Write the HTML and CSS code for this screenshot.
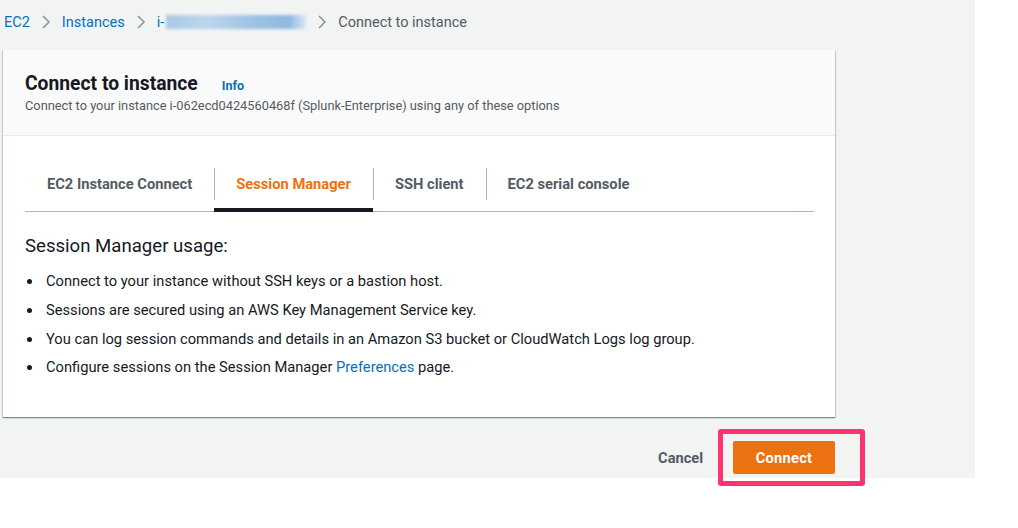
FILE: index.html
```html
<!DOCTYPE html>
<html lang="en">
<head>
<meta charset="utf-8">
<title>Connect to instance</title>
<link rel="stylesheet" href="styles.css">
</head>
<body>
<div class="page">
  <nav class="crumbs">
    <a class="crumb-link" href="#">EC2</a>
    <svg class="chev" viewBox="0 0 10 16" width="10" height="16"><path d="M2 2 L8 8 L2 14" fill="none" stroke="#879596" stroke-width="1.5"/></svg>
    <a class="crumb-link" href="#">Instances</a>
    <svg class="chev" viewBox="0 0 10 16" width="10" height="16"><path d="M2 2 L8 8 L2 14" fill="none" stroke="#879596" stroke-width="1.5"/></svg>
    <a class="crumb-link crumb-id" href="#">i-<span class="blurred"></span></a>
    <svg class="chev" viewBox="0 0 10 16" width="10" height="16"><path d="M2 2 L8 8 L2 14" fill="none" stroke="#879596" stroke-width="1.5"/></svg>
    <span class="crumb-current">Connect to instance</span>
  </nav>

  <section class="card">
    <header class="card-header">
      <div class="title-row">
        <h1 class="title">Connect to instance</h1>
        <a class="info" href="#">Info</a>
      </div>
      <p class="subtitle">Connect to your instance i-062ecd0424560468f (Splunk-Enterprise) using any of these options</p>
    </header>
    <div class="card-body">
      <div class="tabs">
        <div class="tab"><span>EC2 Instance Connect</span></div>
        <div class="tab active"><span>Session Manager</span></div>
        <div class="tab"><span>SSH client</span></div>
        <div class="tab"><span>EC2 serial console</span></div>
      </div>
      <h2 class="usage-title">Session Manager usage:</h2>
      <ul class="usage">
        <li>Connect to your instance without SSH keys or a bastion host.</li>
        <li>Sessions are secured using an AWS Key Management Service key.</li>
        <li>You can log session commands and details in an Amazon S3 bucket or CloudWatch Logs log group.</li>
        <li>Configure sessions on the Session Manager <a class="link" href="#">Preferences</a> page.</li>
      </ul>
    </div>
  </section>

  <div class="actions">
    <button class="btn-cancel" type="button">Cancel</button>
    <div class="highlight-wrap">
      <button class="btn-primary" type="button">Connect</button>
      <span class="highlight"></span>
    </div>
  </div>
</div>
</body>
</html>
```

FILE: styles.css
```css
* { box-sizing: border-box; }
html, body { margin: 0; padding: 0; background: #ffffff; }
body {
  min-height: 528px;
  font-family: Roboto, "Open Sans", "Liberation Sans", sans-serif;
  color: #16191f;
  font-size: 14.7px;
}
.page {
  position: relative;
  width: 975px;
  height: 478px;
  background: #f2f3f3;
  padding-left: 3px;
}
.crumbs {
  height: 50px;
  padding-left: 1px;
  padding-bottom: 6px;
  display: flex;
  align-items: center;
  font-size: 14.5px;
}
.crumb-link { color: #0073bb; text-decoration: none; }
.chev { margin: 0 11px 0 11px; }
.crumb-id { display: inline-flex; align-items: center; }
.blurred {
  display: inline-block;
  width: 140px;
  height: 14px;
  margin-left: 2px;
  background: linear-gradient(90deg, #a9c9e4 0%, #bcd6ec 30%, #9fc3e3 60%, #8fb9df 88%, #dbe8f4 100%);
  filter: blur(1.5px);
}
.crumb-current { color: #545b64; }

.card {
  width: 832px;
  background: #ffffff;
  box-shadow: 0 1px 1px 0 rgba(0, 28, 36, 0.3), 1px 1px 1px 0 rgba(0, 28, 36, 0.15), -1px 1px 1px 0 rgba(0, 28, 36, 0.15);
}
.card-header {
  background: #fafafa;
  border-bottom: 1px solid #eaeded;
  padding: 22px 22px 20px 22px;
  height: 86px;
}
.title-row { display: flex; align-items: baseline; gap: 24px; }
.title {
  margin: 0;
  font-size: 19.3px;
  line-height: 24px;
  font-weight: 700;
  color: #16191f;
}
.info {
  color: #0073bb;
  font-weight: 700;
  font-size: 12.5px;
  text-decoration: none;
}
.subtitle {
  margin: 2px 0 0 0;
  font-size: 12.8px;
  line-height: 16px;
  color: #545b64;
}
.card-body {
  padding: 20px 21px 30px 22px;
  height: 281px;
}
.tabs {
  display: flex;
  height: 56px;
  border-bottom: 1px solid #aab7b8;
}
.tab {
  position: relative;
  display: flex;
  align-items: center;
  padding: 0 22px 0 22px;
  font-weight: 700;
  color: #545b64;
  font-size: 14.7px;
}
.tab + .tab::before {
  content: "";
  position: absolute;
  left: 0;
  top: 12px;
  height: 32px;
  width: 1px;
  background: #aab7b8;
}
.tab.active { color: #ec7211; }
.tab.active::after {
  content: "";
  position: absolute;
  left: 0;
  right: 0;
  bottom: -1px;
  height: 4px;
  background: #16191f;
}
.usage-title {
  margin: 23px 0 0 0;
  font-size: 18.6px;
  line-height: 22px;
  font-weight: 400;
}
.usage {
  margin: 14px 0 0 0;
  padding-left: 21px;
  line-height: 20px;
  list-style: none;
}
.usage li { position: relative; margin-bottom: 8.8px; }
.usage li::before {
  content: "";
  position: absolute;
  left: -19px;
  top: 8px;
  width: 5px;
  height: 5px;
  border-radius: 50%;
  background: #16191f;
}
.link { color: #0073bb; text-decoration: none; }

.actions {
  width: 832px;
  display: flex;
  justify-content: flex-end;
  align-items: center;
  margin-top: 24px;
}
.btn-cancel {
  background: none;
  border: none;
  font-family: inherit;
  font-weight: 700;
  font-size: 14.6px;
  color: #545b64;
  padding: 0;
  margin-right: 30px;
}
.highlight-wrap { position: relative; }
.btn-primary {
  display: block;
  width: 102px;
  height: 33px;
  background: #ec7211;
  color: #ffffff;
  border: none;
  border-radius: 2px;
  font-family: inherit;
  font-weight: 700;
  font-size: 14.6px;
  letter-spacing: 0.3px;
}
.highlight {
  position: absolute;
  z-index: 2;
  left: -15px;
  top: -12px;
  width: 147px;
  height: 57px;
  border: 5px solid #ff3370;
  border-radius: 3px;
}
```
